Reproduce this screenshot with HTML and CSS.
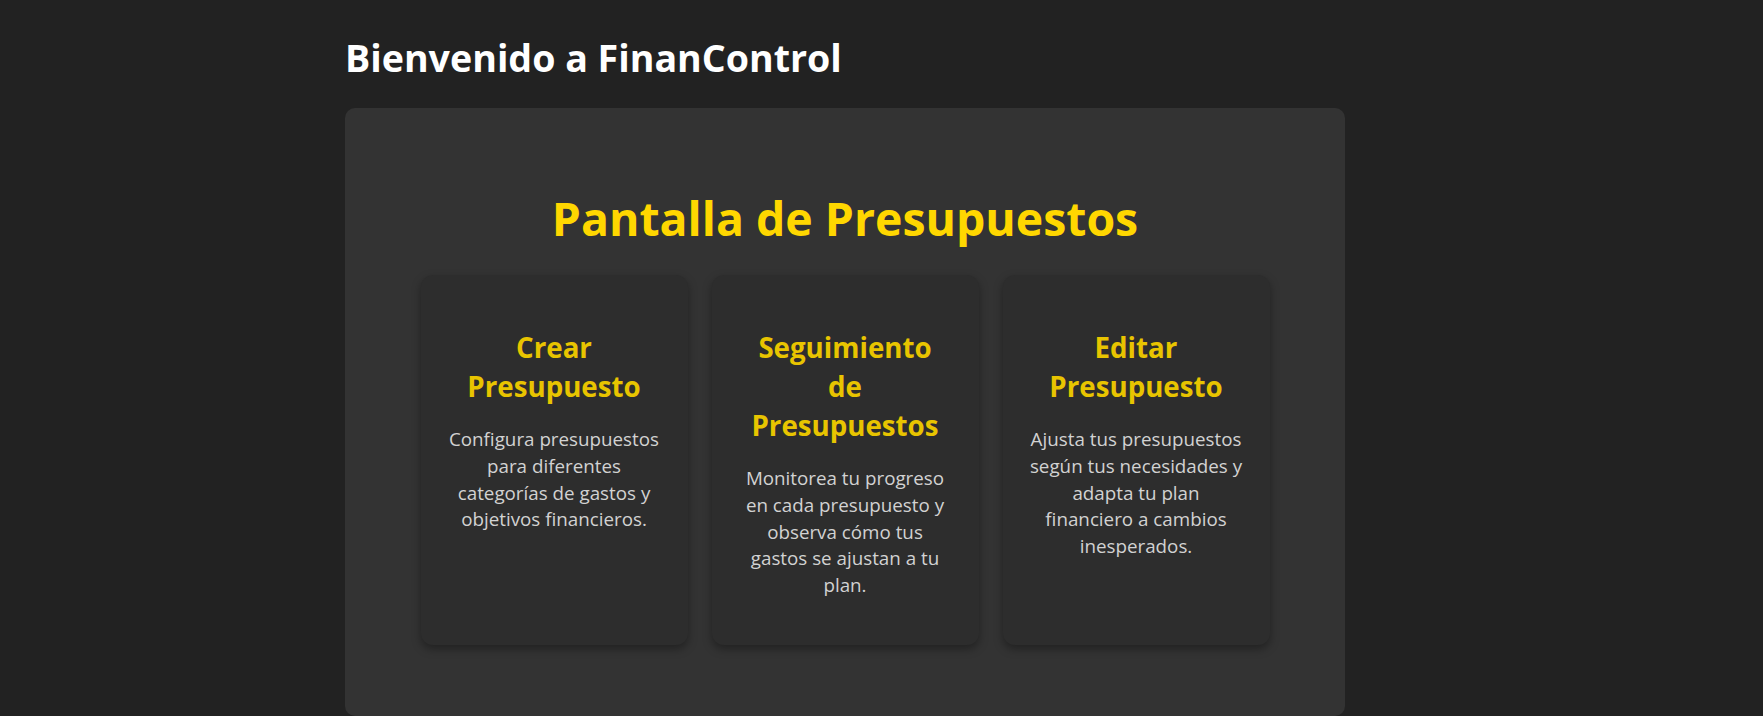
FILE: index.html
```html
<!DOCTYPE html>
<html lang="es">
<head>
<meta charset="utf-8">
<title>FinanControl</title>
<link rel="stylesheet" href="styles.css">
</head>
<body>
<div class="page">
  <h1 class="welcome">Bienvenido a FinanControl</h1>
  <section class="panel">
    <h2 class="panel-title">Pantalla de Presupuestos</h2>
    <div class="cards">
      <article class="card">
        <h3 class="card-title">Crear<br>Presupuesto</h3>
        <p class="card-text">Configura presupuestos<br>para diferentes<br>categorías de gastos y<br>objetivos financieros.</p>
      </article>
      <article class="card">
        <h3 class="card-title">Seguimiento<br>de<br>Presupuestos</h3>
        <p class="card-text">Monitorea tu progreso<br>en cada presupuesto y<br>observa cómo tus<br>gastos se ajustan a tu<br>plan.</p>
      </article>
      <article class="card">
        <h3 class="card-title">Editar<br>Presupuesto</h3>
        <p class="card-text">Ajusta tus presupuestos<br>según tus necesidades y<br>adapta tu plan<br>financiero a cambios<br>inesperados.</p>
      </article>
    </div>
  </section>
</div>
</body>
</html>
```

FILE: styles.css
```css
html, body {
  margin: 0;
  padding: 0;
  background: #222222;
  height: 100%;
  overflow: hidden;
}

body {
  font-family: "Open Sans", "Noto Sans", sans-serif;
  color: #ffffff;
}

.page {
  width: 1000px;
  margin: 0 0 0 345px;
  padding-top: 34px;
}

.welcome {
  margin: 0 0 26px 0;
  font-size: 37.6px;
  line-height: 48px;
  font-weight: 700;
  color: #ffffff;
}

.panel {
  background: #333333;
  border-radius: 10px;
  padding: 80px 0 71px 0;
}

.panel-title {
  margin: 0 0 27px 0;
  text-align: center;
  font-size: 46.4px;
  line-height: 60px;
  font-weight: 700;
  color: #ffd700;
}

.cards {
  display: flex;
  justify-content: center;
  gap: 24px;
}

.card {
  width: 267px;
  box-sizing: border-box;
  height: 370px;
  padding: 53px 12px 0 12px;
  background: #2d2d2d;
  border-radius: 12px;
  box-shadow: 0 4px 10px rgba(0, 0, 0, 0.35);
  text-align: center;
  display: flex;
  flex-direction: column;
  gap: 20px;
}

.card-title {
  margin: 0;
  font-size: 27.7px;
  line-height: 39px;
  font-weight: 700;
  color: #e8c400;
}

.card-text {
  margin: 0;
  font-size: 18.8px;
  line-height: 26.8px;
  color: #d2d2d2;
}
```
